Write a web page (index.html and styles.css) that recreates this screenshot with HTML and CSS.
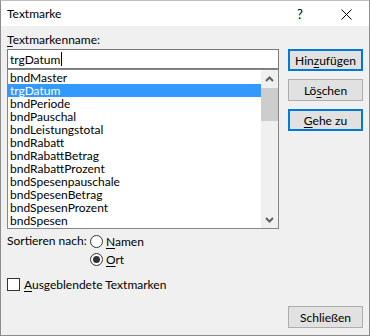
FILE: index.html
```html
<!DOCTYPE html>
<html lang="de">
<head>
    <meta charset="UTF-8" />
    <title>Textmarke</title>
    <link rel="stylesheet" href="styles.css">
</head>
<body>
    <div class="dialog">
        <div class="titlebar">
            <span class="title">Textmarke</span>
            <span class="help">?</span>
            <span class="close">
                <svg width="11" height="11" viewBox="0 0 11 11"><path d="M0.5 0.5 L10.5 10.5 M10.5 0.5 L0.5 10.5" stroke="#000" stroke-width="1" fill="none"/></svg>
            </span>
        </div>
        <div class="client">
            <div class="main">
                <div class="left">
                    <label class="caption"><u>T</u>extmarkenname:</label>
                    <div class="namebox">trgDatum<span class="caret"></span></div>
                    <div class="listbox">
                        <ul class="items">
                            <li>bndMaster</li>
                            <li class="selected">trgDatum</li>
                            <li>bndPeriode</li>
                            <li>bndPauschal</li>
                            <li>bndLeistungstotal</li>
                            <li>bndRabatt</li>
                            <li>bndRabattBetrag</li>
                            <li>bndRabattProzent</li>
                            <li>bndSpesenpauschale</li>
                            <li>bndSpesenBetrag</li>
                            <li>bndSpesenProzent</li>
                            <li>bndSpesen</li>
                        </ul>
                        <div class="scrollbar">
                            <div class="arrow">
                                <svg width="9" height="6" viewBox="0 0 9 6"><path d="M1 5 L4.5 1.5 L8 5" stroke="#606060" stroke-width="2" fill="none"/></svg>
                            </div>
                            <div class="track"><div class="thumb"></div></div>
                            <div class="arrow">
                                <svg width="9" height="6" viewBox="0 0 9 6"><path d="M1 1 L4.5 4.5 L8 1" stroke="#606060" stroke-width="2" fill="none"/></svg>
                            </div>
                        </div>
                    </div>
                    <div class="sortrow">
                        <span class="sortlabel">Sortieren nach:</span>
                        <div class="radios">
                            <div class="option"><span class="radio"></span><span><u>N</u>amen</span></div>
                            <div class="option"><span class="radio checked"></span><span><u>O</u>rt</span></div>
                        </div>
                    </div>
                    <div class="option hidden-marks"><span class="checkbox"></span><span><u>A</u>usgeblendete Textmarken</span></div>
                </div>
                <div class="buttons">
                    <button class="btn default">Hin<u>z</u>ufügen</button>
                    <button class="btn">Lö<u>s</u>chen</button>
                    <button class="btn default"><u>G</u>ehe zu</button>
                </div>
            </div>
            <div class="footer">
                <button class="btn">Schließen</button>
            </div>
        </div>
    </div>
</body>
</html>
```

FILE: styles.css
```css
* {
    box-sizing: border-box;
}
body {
    margin: 0;
    font-family: Lato, "Liberation Sans", sans-serif;
    font-size: 12px;
    color: #000;
    background: #fff;
}
u {
    text-decoration: underline;
    text-underline-offset: 2px;
}
.dialog {
    width: 370px;
    height: 336px;
    border: 1px solid #8c8c8c;
    border-top-color: #bdbdbd;
    background: #f0f0f0;
    display: flex;
    flex-direction: column;
}
.titlebar {
    height: 25px;
    background: #fff;
    display: flex;
    align-items: center;
    padding-left: 6px;
}
.title {
    flex: 1;
    font-size: 12px;
}
.help {
    width: 46px;
    text-align: center;
    margin-right: 0;
    font-size: 13px;
}
.close {
    width: 46px;
    display: flex;
    justify-content: center;
    padding-top: 1px;
}
.client {
    flex: 1;
    display: flex;
    flex-direction: column;
    padding: 6px 6px 7px 6px;
}
.main {
    display: flex;
    gap: 9px;
}
.left {
    width: 272px;
}
.caption {
    display: block;
    height: 17px;
    line-height: 16px;
}
.namebox {
    height: 20px;
    border: 1px solid #7a7a7a;
    background: #fff;
    padding-left: 2px;
    line-height: 17px;
    display: flex;
    align-items: center;
}
.caret {
    width: 1px;
    height: 14px;
    background: #000;
    margin-left: 1px;
}
.listbox {
    height: 160px;
    border: 1px solid #828790;
    background: #fff;
    display: flex;
}
.items {
    list-style: none;
    margin: 0;
    padding: 1px 0 0 0;
    flex: 1;
}
.items li {
    height: 13px;
    line-height: 13px;
    padding-left: 2px;
    white-space: nowrap;
}
.items li.selected {
    background: #3399ff;
    color: #fff;
}
.scrollbar {
    width: 17px;
    background: #f0f0f0;
    display: flex;
    flex-direction: column;
}
.arrow {
    height: 17px;
    display: flex;
    align-items: center;
    justify-content: center;
}
.track {
    flex: 1;
    padding-top: 1px;
}
.thumb {
    height: 33px;
    background: #cdcdcd;
}
.sortrow {
    display: flex;
    margin-top: 4px;
}
.sortlabel {
    width: 83px;
    line-height: 16px;
}
.radios {
    display: flex;
    flex-direction: column;
    gap: 2px;
}
.option {
    display: flex;
    align-items: center;
    height: 16px;
    gap: 3px;
}
.radio {
    width: 13px;
    height: 13px;
    border: 1px solid #333;
    border-radius: 50%;
    background: #fff;
    display: flex;
    align-items: center;
    justify-content: center;
}
.radio.checked::after {
    content: "";
    width: 7px;
    height: 7px;
    border-radius: 50%;
    background: #333;
}
.hidden-marks {
    margin-top: 9px;
}
.checkbox {
    width: 13px;
    height: 13px;
    border: 1px solid #333;
    background: #fff;
    margin-right: 1px;
}
.buttons {
    display: flex;
    flex-direction: column;
    gap: 8px;
    padding-top: 17px;
}
.btn {
    width: 75px;
    height: 22px;
    font-family: inherit;
    font-size: 12px;
    color: #000;
    background: #e1e1e1;
    border: 1px solid #adadad;
    padding: 0;
}
.btn.default {
    border: 2px solid #0078d7;
}
.footer {
    margin-top: auto;
    display: flex;
    justify-content: flex-end;
}
```
